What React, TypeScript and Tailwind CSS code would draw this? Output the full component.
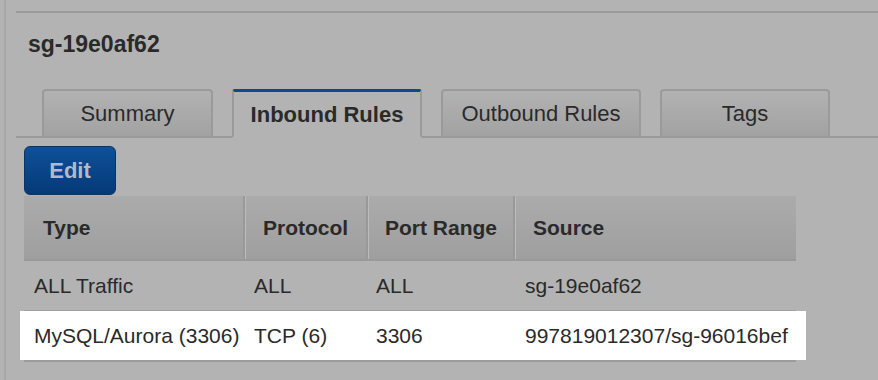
const tabs = [
  { label: "Summary", width: "w-[171px]", active: false },
  { label: "Inbound Rules", width: "w-[190px]", active: true },
  { label: "Outbound Rules", width: "w-[200px]", active: false },
  { label: "Tags", width: "w-[170px]", active: false },
];

const rows = [
  { type: "ALL Traffic", protocol: "ALL", range: "ALL", source: "sg-19e0af62", highlight: false },
  {
    type: "MySQL/Aurora (3306)",
    protocol: "TCP (6)",
    range: "3306",
    source: "997819012307/sg-96016bef",
    highlight: true,
  },
];

export default function App() {
  return (
    <div className="h-[380px] w-[878px] overflow-hidden bg-[#b3b3b3] pl-[4px] font-['Liberation_Sans',Arial,sans-serif] text-[#2a2a2a]">
      <div className="h-full border-l-2 border-[#a7a7a7] pl-[10px] pt-[11px]">
        <div className="border-t-2 border-[#9b9b9b]">
          {/* Title */}
          <h1 className="ml-[12px] mt-[18px] text-[23px] leading-[26px] font-bold">sg-19e0af62</h1>

          {/* Tabs */}
          <div className="mt-[32px] flex items-end gap-[19px] border-b-2 border-[#9a9a9a] pl-[26px]">
            {tabs.map((t) =>
              t.active ? (
                <div
                  key={t.label}
                  className={`${t.width} -mb-[2px] flex h-[49px] items-center justify-center rounded-t-[3px] border-x-2 border-t-[3px] border-b-2 border-x-[#9a9a9a] border-t-[#0d4a8c] border-b-[#b3b3b3] bg-[#b3b3b3] text-[22px] font-bold`}
                >
                  {t.label}
                </div>
              ) : (
                <div
                  key={t.label}
                  className={`${t.width} -mb-[2px] flex h-[49px] items-center justify-center rounded-t-[4px] border-2 border-[#9a9a9a] bg-gradient-to-b from-[#b2b2b2] to-[#a2a2a2] text-[22px]`}
                >
                  {t.label}
                </div>
              )
            )}
          </div>

          {/* Edit button */}
          <button className="ml-[8px] mt-[8px] flex h-[49px] w-[92px] items-center justify-center rounded-[6px] border border-[#0a3563] bg-gradient-to-b from-[#0f5099] to-[#053a77] text-[22px] font-bold text-[#b3bac4]">
            Edit
          </button>

          {/* Table */}
          <div className="ml-[8px] mt-[1px] w-[772px]">
            <div className="flex h-[65px] border-b-2 border-[#999999] bg-gradient-to-b from-[#ababab] to-[#9f9f9f] text-[21px] font-bold">
              <div className="flex w-[221px] items-center border-r-2 border-[#999999] pl-[19px]">Type</div>
              <div className="flex w-[123px] items-center border-l border-r-2 border-l-[#bcbcbc] border-r-[#999999] pl-[17px]">
                Protocol
              </div>
              <div className="flex w-[147px] items-center border-l border-r-2 border-l-[#bcbcbc] border-r-[#999999] pl-[16px]">
                Port Range
              </div>
              <div className="flex w-[281px] items-center border-l border-l-[#bcbcbc] pl-[17px]">Source</div>
            </div>

            {rows.map((r) =>
              r.highlight ? (
                <div key={r.type} className="-ml-[4px] flex h-[49px] w-[786px] items-center bg-white pl-[4px] text-[21px]">
                  <div className="w-[221px] pl-[10px]">{r.type}</div>
                  <div className="w-[123px] pl-[9px]">{r.protocol}</div>
                  <div className="w-[147px] pl-[8px]">{r.range}</div>
                  <div className="w-[281px] pl-[10px]">{r.source}</div>
                </div>
              ) : (
                <div key={r.type} className="flex h-[50px] items-center border-b border-[#a0a0a0] text-[21px]">
                  <div className="w-[221px] pl-[10px]">{r.type}</div>
                  <div className="w-[123px] pl-[9px]">{r.protocol}</div>
                  <div className="w-[147px] pl-[8px]">{r.range}</div>
                  <div className="w-[281px] pl-[10px]">{r.source}</div>
                </div>
              )
            )}
            <div className="h-[2px] bg-[#9c9c9c]" />
          </div>
        </div>
      </div>
    </div>
  );
}
